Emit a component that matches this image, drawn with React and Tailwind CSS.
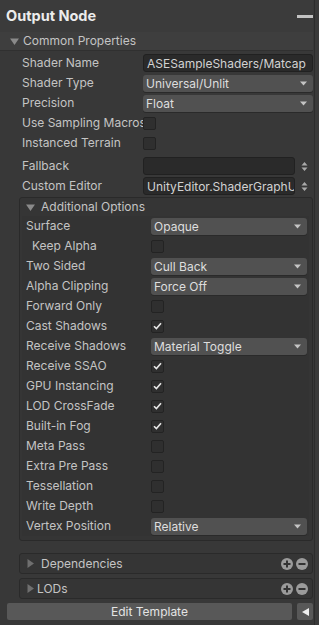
const FONT = { fontFamily: "Inter, 'Noto Sans', sans-serif" };

function Caret() {
  return (
    <svg width="7" height="5" viewBox="0 0 7 5" className="shrink-0">
      <path d="M0 0.5h7L3.5 4.5z" fill="#c4c4c4" />
    </svg>
  );
}

function Spinner() {
  return (
    <svg width="7" height="11" viewBox="0 0 7 11" className="shrink-0">
      <path d="M0.5 4.5L3.5 1l3 3.5z M0.5 6.5h6L3.5 10z" fill="#a9a9a9" />
    </svg>
  );
}

function Check() {
  return (
    <svg width="9" height="8" viewBox="0 0 9 8">
      <path d="M1 4.2l2.4 2.4L8 1.2" stroke="#e6e6e6" strokeWidth="1.6" fill="none" />
    </svg>
  );
}

function Checkbox({ on }) {
  return (
    <div className="flex h-[13px] w-[13px] items-center justify-center rounded-[2px] border border-[#232323] bg-[#2f2f2f]">
      {on && <Check />}
    </div>
  );
}

function Dropdown({ value }) {
  return (
    <div className="flex h-[17px] w-full items-center justify-between rounded-[3px] bg-[#515151] pl-[3px] pr-[6px] text-[#dedede] shadow-[0_1px_0_#2a2a2a]">
      <span className="whitespace-nowrap leading-[15px]">{value}</span>
      <Caret />
    </div>
  );
}

function Field({ value, spinner, width }) {
  return (
    <div className="flex w-full items-center gap-[6px]">
      <div className={`flex h-[18px] ${width} items-center overflow-hidden whitespace-nowrap rounded-[3px] border border-[#212121] bg-[#2a2a2a] pl-[3px] leading-[15px] text-[#d2d2d2]`}>
        {value}
      </div>
      {spinner && <Spinner />}
    </div>
  );
}

function Row({ label, indent, labelW, children }) {
  return (
    <div className="flex h-[20px] items-center">
      <div className={`${labelW} ${indent ? "pl-[6px]" : ""} shrink-0 overflow-hidden whitespace-nowrap leading-[16px] text-[#c4c4c4]`}>
        {label}
      </div>
      <div className="flex min-w-0 flex-1 items-center">{children}</div>
    </div>
  );
}

function Tri({ open }) {
  return (
    <svg width="9" height="9" viewBox="0 0 9 9" className="shrink-0">
      {open ? <path d="M0 1.5h9L4.5 8z" fill="#8a8a8a" /> : <path d="M1.5 0v9L8 4.5z" fill="#6f6f6f" />}
    </svg>
  );
}

function PlusMinus() {
  return (
    <div className="flex items-center gap-[3px]">
      <svg width="12" height="12" viewBox="0 0 12 12">
        <circle cx="6" cy="6" r="6" fill="#9b9b9b" />
        <path d="M6 2.5v7M2.5 6h7" stroke="#333" strokeWidth="2" />
      </svg>
      <svg width="12" height="12" viewBox="0 0 12 12">
        <circle cx="6" cy="6" r="6" fill="#9b9b9b" />
        <path d="M2.5 6h7" stroke="#333" strokeWidth="2" />
      </svg>
    </div>
  );
}

const inner = [
  ["Surface", "dd", "Opaque"],
  ["Keep Alpha", "cb", false, true],
  ["Two Sided", "dd", "Cull Back"],
  ["Alpha Clipping", "dd", "Force Off"],
  ["Forward Only", "cb", false],
  ["Cast Shadows", "cb", true],
  ["Receive Shadows", "dd", "Material Toggle"],
  ["Receive SSAO", "cb", true],
  ["GPU Instancing", "cb", true],
  ["LOD CrossFade", "cb", true],
  ["Built-in Fog", "cb", true],
  ["Meta Pass", "cb", false],
  ["Extra Pre Pass", "cb", false],
  ["Tessellation", "cb", false],
  ["Write Depth", "cb", false],
  ["Vertex Position", "dd", "Relative"],
];

export default function App() {
  return (
    <div style={FONT} className="flex h-[625px] w-[319px] overflow-hidden bg-[#383838] text-[12px] leading-[16px]">
      <div className="flex w-[313px] flex-col">
        <div className="flex h-[32px] items-center justify-between bg-[#3b3b3b] pl-[6px]">
          <span className="text-[14.5px] font-bold leading-[18px] text-[#ececec]">Output Node</span>
          <div className="h-[3px] w-[16px] bg-[#c2c2c2]" />
        </div>
        <div className="flex h-[19px] items-center gap-[4px] border-b border-[#303030] bg-[#3e3e3e] pl-[10px] text-[#c4c4c4]">
          <Tri open />
          <span>Common Properties</span>
        </div>
        <div className="flex flex-col pl-[22px] pt-[2px]">
          <Row label="Shader Name" labelW="w-[121px]">
            <Field value="ASESampleShaders/Matcap" width="w-full" />
          </Row>
          <Row label="Shader Type" labelW="w-[121px]">
            <Dropdown value="Universal/Unlit" />
          </Row>
          <Row label="Precision" labelW="w-[121px]">
            <Dropdown value="Float" />
          </Row>
          <Row label="Use Sampling Macros" labelW="w-[121px]">
            <Checkbox />
          </Row>
          <Row label="Instanced Terrain" labelW="w-[121px]">
            <Checkbox />
          </Row>
          <div className="h-[3px]" />
          <Row label="Fallback" labelW="w-[121px]">
            <Field value="" spinner width="w-[152px]" />
          </Row>
          <Row label="Custom Editor" labelW="w-[121px]">
            <Field value="UnityEditor.ShaderGraphUnlitGUI" spinner width="w-[152px]" />
          </Row>
        </div>

        <div className="ml-[19px] mt-[1px] flex flex-col rounded-[3px] border border-[#2a2a2a] bg-[#353535]">
          <div className="flex h-[18px] items-center gap-[6px] pl-[6px] text-[#c4c4c4]">
            <Tri open />
            <span>Additional Options</span>
          </div>
          <div className="mb-[4px] ml-[2px] mr-[3px] flex flex-col bg-[#333333] pl-[4px] pr-[2px]">
            {inner.map(([label, kind, val, indent]) => (
              <Row key={label} label={label} indent={indent} labelW="w-[125px]">
                {kind === "dd" ? <Dropdown value={val} /> : <Checkbox on={val} />}
              </Row>
            ))}
          </div>
        </div>

        <div className="ml-[19px] mt-[12px] flex h-[21px] items-center justify-between rounded-[3px] border border-[#2a2a2a] bg-[#353535] pl-[6px] pr-[4px] text-[#c4c4c4]">
          <div className="flex items-center gap-[6px]">
            <Tri />
            <span>Dependencies</span>
          </div>
          <PlusMinus />
        </div>
        <div className="ml-[19px] mt-[4px] flex h-[21px] items-center justify-between rounded-[3px] border border-[#2a2a2a] bg-[#353535] pl-[6px] pr-[4px] text-[#c4c4c4]">
          <div className="flex items-center gap-[2px]">
            <Tri />
            <span>LODs</span>
          </div>
          <PlusMinus />
        </div>
        <div className="ml-[7px] mt-[4px] flex h-[17px] items-center gap-[5px]">
          <div className="flex h-full flex-1 items-center justify-center rounded-[2px] bg-[#585858] text-[#e4e4e4]">
            Edit Template
          </div>
          <div className="flex h-full w-[16px] items-center justify-center rounded-[2px] bg-[#585858]">
            <svg width="7" height="8" viewBox="0 0 7 8">
              <path d="M7 0v8L0 4z" fill="#eeeeee" />
            </svg>
          </div>
        </div>
      </div>
      <div className="ml-[1px] w-[5px] border-l border-[#2c2c2c] bg-[#3a3a3a]" />
    </div>
  );
}
